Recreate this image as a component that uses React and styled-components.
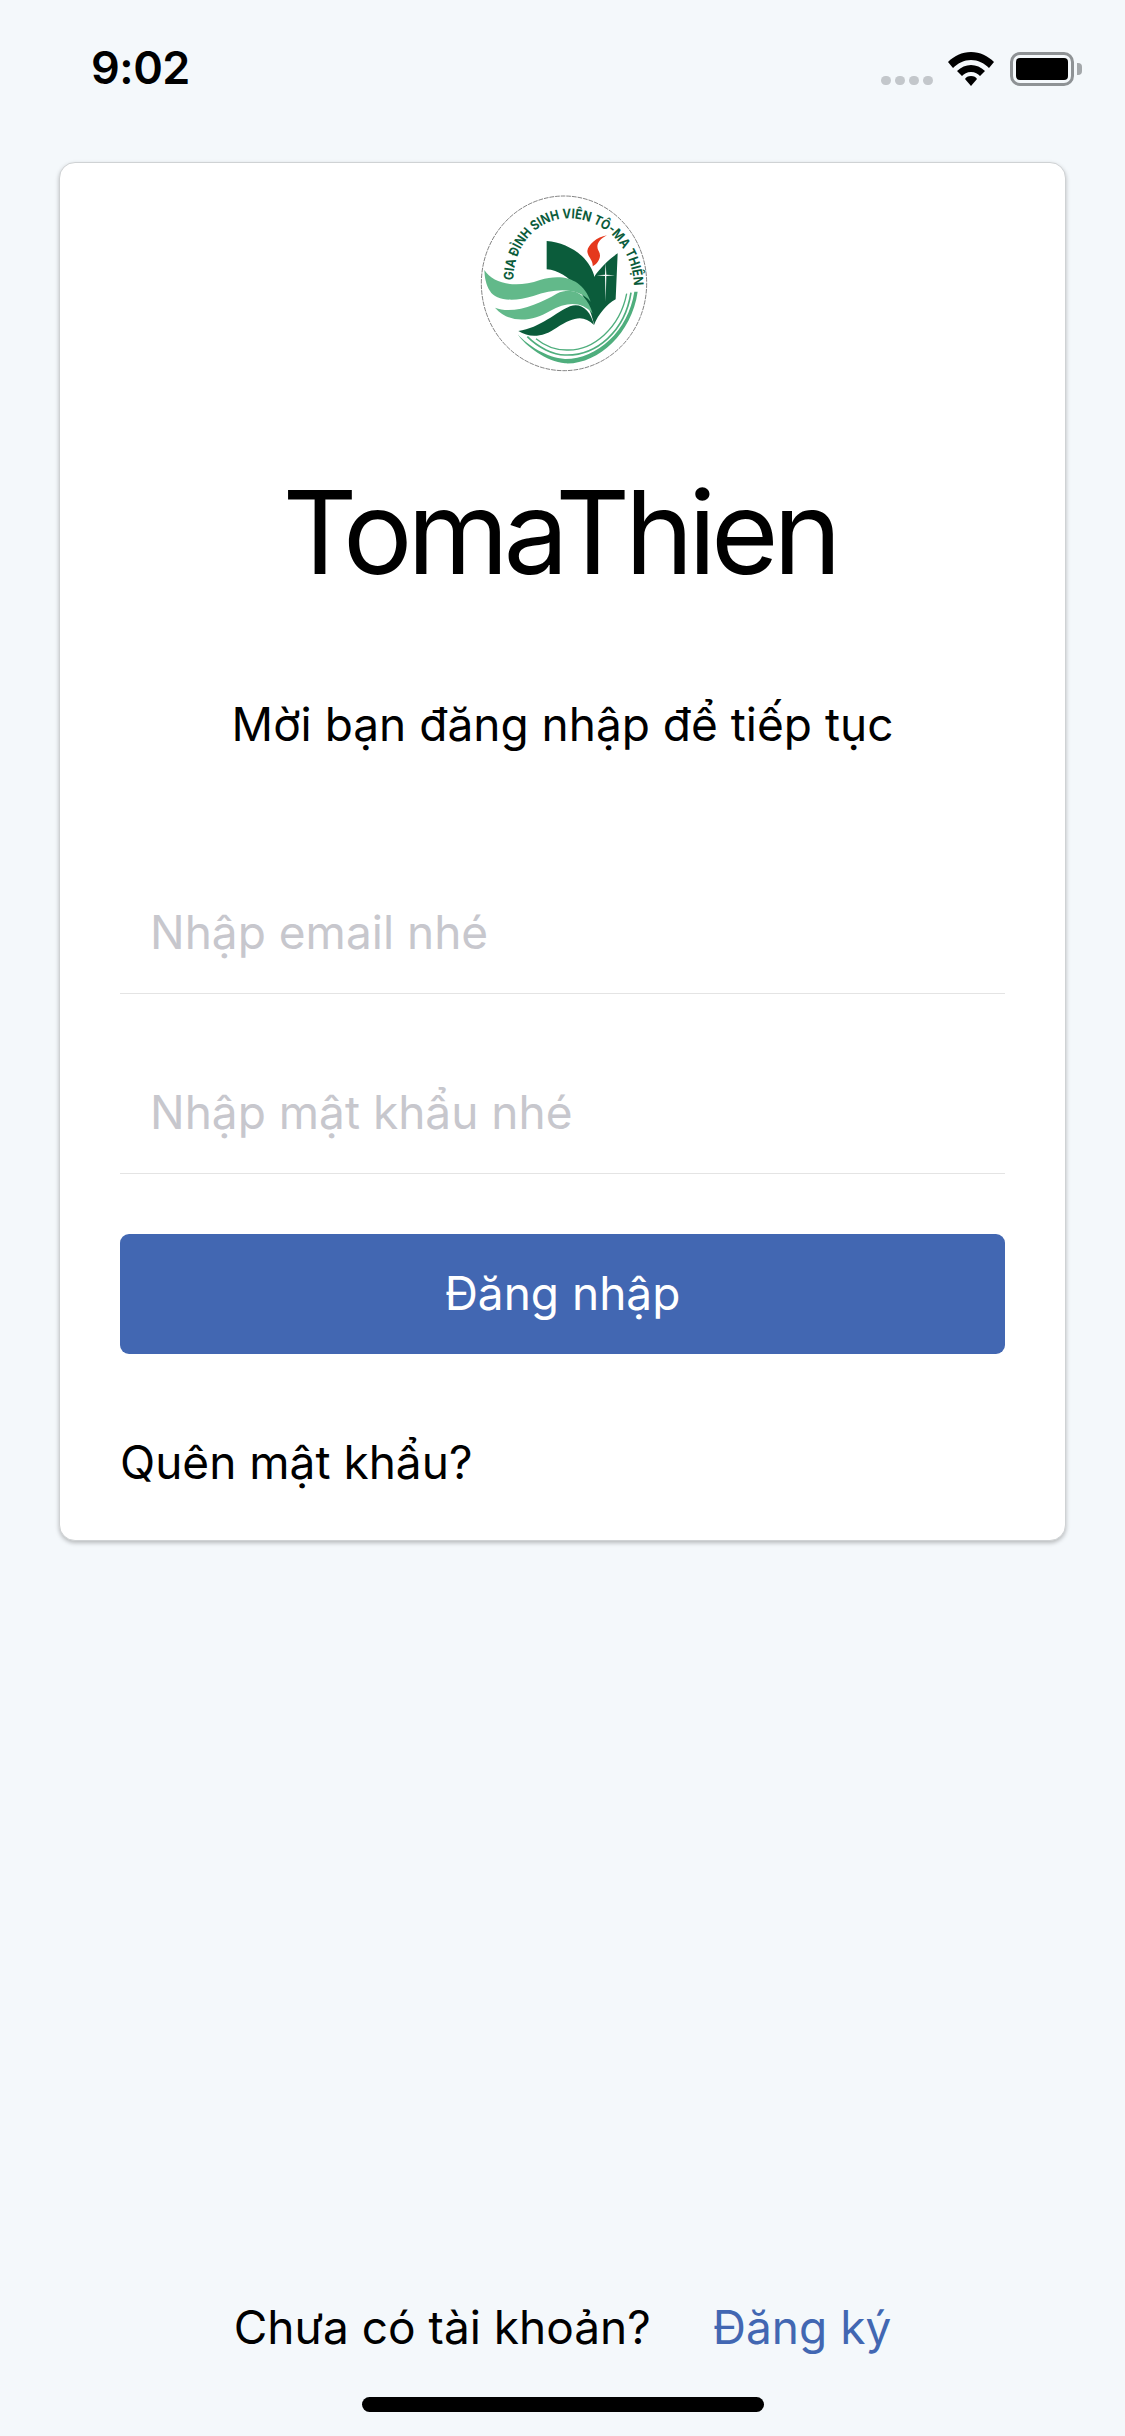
import React from "react"
import styled, { createGlobalStyle } from "styled-components"

const GlobalStyle = createGlobalStyle`
  *{
    margin:0;
    padding:0;
    box-sizing:border-box;
    font-family: Inter, "Noto Sans", sans-serif;
  }
  body{
    background:#f4f8fb;
  }
`

const Screen = styled.div`
  width:1125px;
  height:2436px;
  display:flex;
  flex-direction:column;
  align-items:center;
  background:#f4f8fb;
`
const StatusBar = styled.div`
  width:100%;
  height:162px;
  padding:40px 51px 0 91px;
  display:flex;
  justify-content:space-between;
  align-items:flex-start;
`
const Time = styled.span`
  font-size:45px;
  line-height:56px;
  font-weight:600;
  letter-spacing:-0.5px;
  color:#000;
`
const StatusIcons = styled.div`
  display:flex;
  align-items:flex-end;
  margin-top:12px;
`
const Signal = styled.div`
  display:flex;
  gap:4px;
  margin-right:15px;
  margin-bottom:1px;
`
const SignalDot = styled.i`
  width:10px;
  height:9px;
  border-radius:5px;
  background:#c3c7cb;
`
const Wifi = styled.svg`
  width:46px;
  height:34px;
  margin-right:16px;
`
const Battery = styled.div`
  position:relative;
  width:64px;
  height:34px;
  padding:3px;
  border:3px solid #8e9295;
  border-radius:10px;
  &::after{
    content:"";
    position:absolute;
    right:-11px;
    top:8px;
    width:5px;
    height:12px;
    border-radius:0 4px 4px 0;
    background:#a3a7aa;
  }
`
const BatteryLevel = styled.div`
  width:100%;
  height:100%;
  border-radius:4px;
  background:#000;
`
const Card = styled.div`
  width:1007px;
  height:1379px;
  padding:8px 60px 0;
  display:flex;
  flex-direction:column;
  background:#fff;
  border:1px solid #cfd2d4;
  border-radius:16px;
  box-shadow:0 2px 4px rgba(0,0,0,0.25);
`
const Logo = styled.svg`
  width:220px;
  height:220px;
  align-self:center;
  margin-right:5px;
`
const LogoText = styled.text`
  font-family:"Liberation Serif", serif;
  font-weight:700;
  font-size:40px;
  fill:#0b5c3b;
`
const Title = styled.h1`
  margin-top:69px;
  padding-right:6px;
  font-size:116px;
  line-height:144px;
  font-weight:400;
  letter-spacing:-5.3px;
  text-align:center;
  color:#000;
`
const Subtitle = styled.p`
  margin-top:91px;
  font-size:46px;
  line-height:58px;
  text-align:center;
  color:#000;
`
const Field = styled.input`
  display:block;
  width:100%;
  height:120px;
  margin-top:${(p) => p.$top}px;
  padding:0 30px 3px;
  border:none;
  border-bottom:1px solid #e4e4e4;
  background:transparent;
  outline:none;
  font-size:46px;
  &::placeholder{
    color:#c7c7cd;
    opacity:1;
  }
`
const LoginButton = styled.button`
  width:100%;
  height:120px;
  margin-top:60px;
  padding-bottom:2px;
  border:none;
  border-radius:9px;
  background:#4267b2;
  color:#fff;
  font-size:46px;
`
const ForgotLink = styled.a`
  margin-top:80px;
  font-size:46px;
  line-height:56px;
  color:#000;
`
const Footer = styled.div`
  margin-top:auto;
  display:flex;
  gap:62px;
  font-size:46px;
  line-height:58px;
  color:#000;
`
const SignUp = styled.a`
  color:#4267b2;
`
const HomeIndicator = styled.div`
  width:402px;
  height:15px;
  margin:41px 0 24px;
  border-radius:8px;
  background:#000;
`

function SchoolLogo(){
  return(
    <Logo viewBox="0 0 660 660">
      <defs>
        <path id="logoText" d="M190,328 C190,220 265,142 355,142 C460,142 548,225 552,345" />
      </defs>
      <ellipse cx="342" cy="337" rx="248" ry="262" fill="#fff" stroke="#444" strokeWidth="2" strokeDasharray="14 3" />
      <LogoText>
        <textPath href="#logoText" startOffset="0" textLength="590" lengthAdjust="spacingAndGlyphs">GIA ĐÌNH SINH VIÊN TÔ-MA THIỆN</textPath>
      </LogoText>
      <path d="M290,210 C350,215 412,250 432,312 L432,460 C415,380 360,300 290,295Z" fill="#0b5c3b" />
      <path d="M432,318 C450,292 475,266 503,247 L497,385 C470,400 445,430 432,462Z" fill="#0b5c3b" />
      <path d="M467,275 L469,311 L495,313 L469,315 L467,392 L465,315 L440,313 L465,311Z" fill="#fff" />
      <path d="M471,193 C440,198 414,222 412,240 C412,256 430,268 428,286 C446,276 456,256 446,240 C436,224 446,205 471,193Z" fill="#e5381d" />
      <path d="M103,297 C130,340 200,352 270,327 C340,305 400,325 422,392 C385,350 320,350 250,375 C190,394 135,388 120,360 C108,342 104,320 103,297Z" fill="#62b98a" />
      <path d="M135,410 C190,432 270,398 320,368 C370,345 412,370 428,428 C395,390 350,392 300,420 C250,450 180,462 135,410Z" fill="#62b98a" />
      <path d="M205,480 C270,472 320,422 360,406 C395,394 422,420 432,462 C400,430 370,438 320,470 C280,498 240,502 205,480Z" fill="#0b5c3b" />
      <path d="M203,490 C225,525 290,572 345,577 C440,582 545,490 563,362 L553,362 C535,480 440,565 345,564 C290,560 235,525 203,490Z" fill="#4fae7d" />
      <path d="M232,497 C265,530 310,552 345,552 C440,555 525,480 543,365" fill="none" stroke="#4fae7d" strokeWidth="5" />
      <path d="M258,503 C285,525 320,537 350,537 C430,540 510,470 530,368" fill="none" stroke="#4fae7d" strokeWidth="4" />
    </Logo>
  )
}

export default class App extends React.Component{
  render(){
    return(
      <Screen>
        <GlobalStyle/>
        <StatusBar>
          <Time>9:02</Time>
          <StatusIcons>
            <Signal>
              <SignalDot/><SignalDot/><SignalDot/><SignalDot/>
            </Signal>
            <Wifi viewBox="0 0 46 34">
              <path d="M23,0 C32,0 40,4 46,10 L41,16 C36,11 30,8 23,8 C16,8 10,11 5,16 L0,10 C6,4 14,0 23,0Z" />
              <path d="M23,13 C28,13 33,15 37,19 L32,24 C30,22 27,20 23,20 C19,20 16,22 14,24 L9,19 C13,15 18,13 23,13Z" />
              <path d="M23,24 C26,24 28,25 29,27 L23,34 L17,27 C18,25 20,24 23,24Z" />
            </Wifi>
            <Battery><BatteryLevel/></Battery>
          </StatusIcons>
        </StatusBar>
        <Card>
          <SchoolLogo/>
          <Title>TomaThien</Title>
          <Subtitle>Mời bạn đăng nhập để tiếp tục</Subtitle>
          <Field $top={121} placeholder="Nhập email nhé" />
          <Field $top={60} placeholder="Nhập mật khẩu nhé" />
          <LoginButton>Đăng nhập</LoginButton>
          <ForgotLink>Quên mật khẩu?</ForgotLink>
        </Card>
        <Footer>
          <span>Chưa có tài khoản?</span>
          <SignUp>Đăng ký</SignUp>
        </Footer>
        <HomeIndicator/>
      </Screen>
    )
  }
}
